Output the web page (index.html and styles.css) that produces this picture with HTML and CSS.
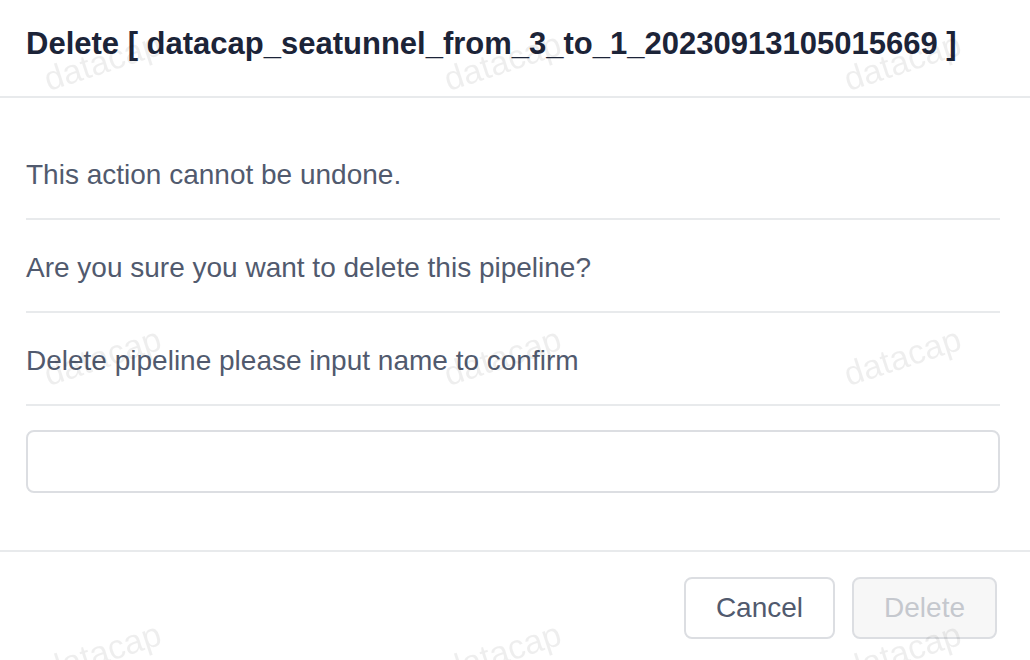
FILE: index.html
```html
<!DOCTYPE html>
<html lang="en">
<head>
<meta charset="utf-8">
<title>Delete pipeline</title>
<link rel="stylesheet" href="styles.css">
</head>
<body>
<div class="modal">
  <div class="modal-header">
    <div class="modal-title">Delete [ datacap_seatunnel_from_3_to_1_20230913105015669 ]</div>
  </div>
  <div class="modal-body">
    <p class="line">This action cannot be undone.</p>
    <div class="divider"></div>
    <p class="line">Are you sure you want to delete this pipeline?</p>
    <div class="divider"></div>
    <p class="line">Delete pipeline please input name to confirm</p>
    <div class="divider divider-last"></div>
    <input class="name-input" type="text">
  </div>
  <div class="modal-footer">
    <button class="btn btn-default" type="button">Cancel</button>
    <button class="btn btn-disabled" type="button" disabled>Delete</button>
  </div>
</div>
<div class="watermark" aria-hidden="true">
  <div class="wm-cell"><span>datacap</span></div>
  <div class="wm-cell"><span>datacap</span></div>
  <div class="wm-cell"><span>datacap</span></div>
  <div class="wm-cell"><span>datacap</span></div>
  <div class="wm-cell"><span>datacap</span></div>
  <div class="wm-cell"><span>datacap</span></div>
  <div class="wm-cell"><span>datacap</span></div>
  <div class="wm-cell"><span>datacap</span></div>
  <div class="wm-cell"><span>datacap</span></div>
</div>
</body>
</html>
```

FILE: styles.css
```css
* {
  box-sizing: border-box;
}

html, body {
  margin: 0;
  padding: 0;
  background: #ffffff;
}

body {
  font-family: "Liberation Sans", Arial, sans-serif;
  color: #515a6e;
  overflow: hidden;
}

.modal {
  width: 1030px;
  height: 660px;
  display: flex;
  flex-direction: column;
  background: #ffffff;
}

.modal-header {
  padding: 23px 26px 31px;
  border-bottom: 2px solid #e8eaec;
}

.modal-title {
  font-size: 31px;
  line-height: 42px;
  font-weight: 700;
  color: #1c2438;
  white-space: nowrap;
}

.modal-body {
  display: flex;
  flex-direction: column;
  padding: 56px 30px 57px 26px;
}

.line {
  margin: 0;
  font-size: 28px;
  line-height: 42px;
  color: #515a6e;
}

.divider {
  height: 2px;
  background: #e8eaec;
  margin: 22px 0 27px;
}

.divider-last {
  margin-bottom: 24px;
}

.name-input {
  display: block;
  width: 100%;
  height: 63px;
  border: 2px solid #dcdee2;
  border-radius: 8px;
  background: #ffffff;
  font-family: inherit;
  font-size: 28px;
  padding: 0 14px;
  outline: none;
}

.modal-footer {
  display: flex;
  justify-content: flex-end;
  gap: 17px;
  padding: 25px 33px 0;
  border-top: 2px solid #e8eaec;
}

.btn {
  height: 62px;
  padding: 0 30px;
  border: 2px solid #dcdee2;
  border-radius: 8px;
  font-family: inherit;
  font-size: 28px;
  line-height: 1;
  background: #ffffff;
  color: #515a6e;
}

.btn-disabled {
  background: #f7f7f7;
  color: #c5c8ce;
}

.watermark {
  position: fixed;
  top: 0;
  left: 0;
  display: grid;
  grid-template-columns: repeat(3, 400px);
  grid-auto-rows: 295px;
  pointer-events: none;
}

.wm-cell {
  padding: 62px 0 0 50px;
}

.wm-cell span {
  display: inline-block;
  font-family: "Liberation Sans", Arial, sans-serif;
  font-size: 34px;
  line-height: 34px;
  color: rgba(0, 0, 0, 0.065);
  transform: rotate(-18deg);
  transform-origin: left bottom;
}
```
